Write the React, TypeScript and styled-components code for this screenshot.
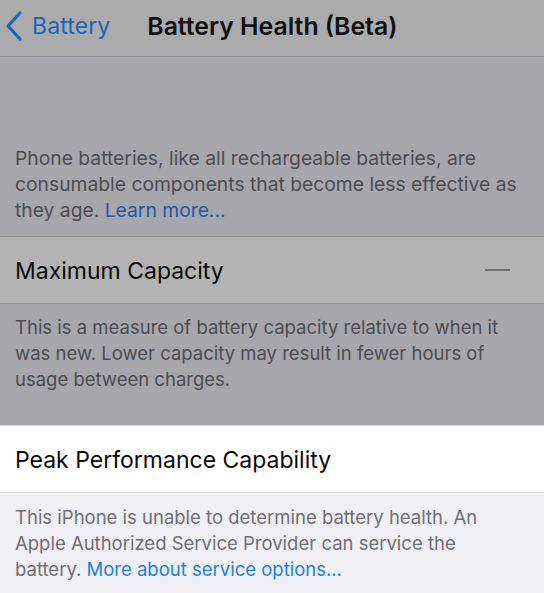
import { createGlobalStyle, styled } from 'styled-components'

const GlobalStyle = createGlobalStyle`
    html, body {
        margin: 0;
        padding: 0;
        background: #efeff4;
    }
    body {
        font-family: Inter, "Liberation Sans", sans-serif;
        -webkit-font-smoothing: antialiased;
    }
`

export default function App() {
    return (
        <>
            <GlobalStyle />
            <Screen>
                <NavBar>
                    <BackButton>
                        <svg width="18" height="32" viewBox="0 0 18 32">
                            <path d="M15 3 L3 16 L15 29" fill="none" stroke="currentColor" strokeWidth="3.2" strokeLinecap="round" strokeLinejoin="round" />
                        </svg>
                        <span>Battery</span>
                    </BackButton>
                    <NavTitle>Battery Health (Beta)</NavTitle>
                </NavBar>

                <Section $tone="dim" $top={88} $bottom={13}>
                    <Note $dim $size={19.3}>
                        Phone batteries, like all rechargeable batteries, are consumable components that become less effective as they age. <Link $dim>Learn more...</Link>
                    </Note>
                </Section>

                <Row $dim>
                    <RowLabel>Maximum Capacity</RowLabel>
                    <Dash />
                </Row>

                <Section $tone="dim" $top={10} $bottom={33}>
                    <Note $dim>
                        This is a measure of battery capacity relative to when it was new. Lower capacity may result in fewer hours of usage between charges.
                    </Note>
                </Section>

                <Row>
                    <RowLabel>Peak Performance Capability</RowLabel>
                </Row>

                <Section $tone="light" $top={11} $bottom={20}>
                    <Note>
                        This iPhone is unable to determine battery health. An Apple Authorized Service Provider can service the battery. <Link>More about service options...</Link>
                    </Note>
                </Section>
            </Screen>
        </>
    )
}

const Screen = styled.div`
    width: 544px;
    height: 593px;
    overflow: hidden;
    display: flex;
    flex-direction: column;
`

const NavBar = styled.header`
    height: 57px;
    box-sizing: border-box;
    padding-bottom: 5px;
    flex-shrink: 0;
    background: #ababab;
    border-bottom: 1px solid #8f8f92;
    display: flex;
    align-items: center;
`

const BackButton = styled.div`
    display: flex;
    align-items: center;
    gap: 9px;
    padding-left: 5px;
    color: #1d63b8;
    font-size: 23px;
    letter-spacing: 0.1px;
    svg {
        margin-top: 1px;
    }
`

const NavTitle = styled.h1`
    margin: 0 0 0 37px;
    font-size: 24.8px;
    font-weight: 600;
    color: #111;
`

const Section = styled.div<{ $tone: 'dim' | 'light'; $top: number; $bottom: number }>`
    background: ${p => (p.$tone === 'dim' ? '#a7a7ab' : '#efeff4')};
    padding: ${p => p.$top}px 20px ${p => p.$bottom}px 15px;
    flex-shrink: 0;
`

const Note = styled.p<{ $dim?: boolean; $size?: number }>`
    margin: 0;
    font-size: ${p => p.$size ?? 18.5}px;
    line-height: 26px;
    color: ${p => (p.$dim ? '#4c4c50' : '#707074')};
`

const Link = styled.span<{ $dim?: boolean }>`
    color: ${p => (p.$dim ? '#1a5bab' : '#1e7fe6')};
`

const Row = styled.div<{ $dim?: boolean }>`
    height: 66px;
    flex-shrink: 0;
    background: ${p => (p.$dim ? '#b3b3b3' : '#ffffff')};
    border-top: 1px solid ${p => (p.$dim ? '#949497' : '#d8d8dc')};
    border-bottom: 1px solid ${p => (p.$dim ? '#949497' : '#d8d8dc')};
    display: flex;
    align-items: center;
    justify-content: space-between;
    padding: 0 34px 0 15px;
`

const RowLabel = styled.span`
    font-size: 23px;
    color: #0a0a0a;
    margin-top: 2px;
`

const Dash = styled.span`
    width: 25px;
    height: 2px;
    background: #6e6e6e;
`
